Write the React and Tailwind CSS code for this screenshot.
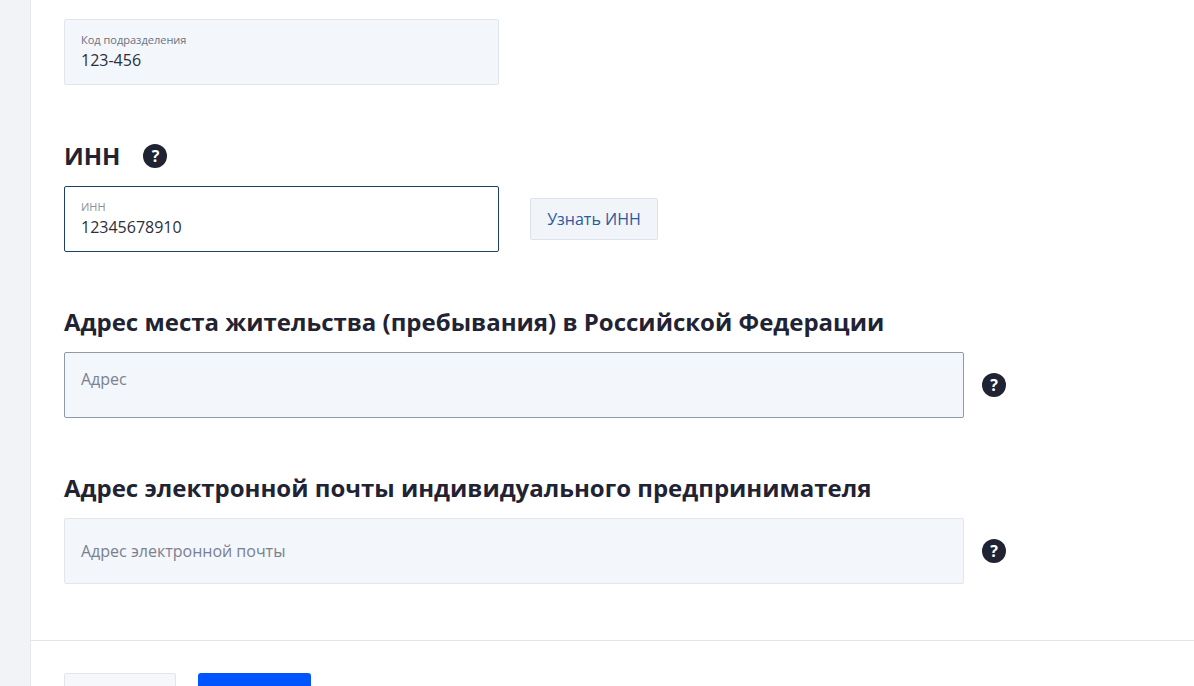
const Help = ({ c = "" }) => (
  <span className={"flex h-6 w-6 items-center justify-center rounded-full bg-[#1f2333] text-[16px] font-bold leading-none text-white " + c}>?</span>
);

export default function App() {
  return (
    <div className="flex h-[686px] w-[1194px] overflow-hidden bg-white text-[#1f2333]" style={{ fontFamily: '"Open Sans", sans-serif' }}>
      <div className="w-[31px] shrink-0 border-r border-[#e4e7ec] bg-[#f1f3f7]" />
      <div className="flex-1">
        <div className="pl-[33px] pt-[19px]">
          <div className="h-[66px] w-[435px] rounded-[2px] border border-[#e1e5ec] bg-[#f3f6fa] px-4 pt-[11px]">
            <div className="text-[11px] leading-[17px] text-[#6b7280]">Код подразделения</div>
            <div className="text-[16px] leading-[24px] text-[#2b2f3a]">123-456</div>
          </div>
          <div className="mt-[57px] flex h-[28px] items-center gap-[23px]">
            <h2 className="text-[24px] font-bold leading-none">ИНН</h2>
            <Help />
          </div>
          <div className="mt-[16px] flex items-start gap-[31px]">
            <div className="h-[66px] w-[435px] rounded-[2px] border border-[#1f3f6b] bg-white px-4 pt-[11px]">
              <div className="text-[11px] leading-[17px] text-[#8a8f99]">ИНН</div>
              <div className="text-[16px] leading-[24px] text-[#2b2f3a]">12345678910</div>
            </div>
            <button className="mt-[12px] h-[42px] w-[128px] rounded-[2px] border border-[#dde3ec] bg-[#f1f4f9] text-[16px] text-[#2a5aa0]">Узнать ИНН</button>
          </div>
          <h2 className="mt-[55px] text-[24px] font-bold leading-[30px]">Адрес места жительства (пребывания) в Российской Федерации</h2>
          <div className="mt-[15px] flex items-center gap-[16px]">
            <div className="h-[66px] w-[900px] rounded-[2px] border border-[#8f99a8] bg-[#f3f6fa] px-4 pt-[14px] text-[16px] text-[#7a8090]">Адрес</div>
            <Help c="ml-[2px]" />
          </div>
          <h2 className="mt-[55px] text-[24px] font-bold leading-[30px]">Адрес электронной почты индивидуального предпринимателя</h2>
          <div className="mt-[15px] flex items-center gap-[16px]">
            <div className="flex h-[66px] w-[900px] items-center rounded-[2px] border border-[#e1e5ec] bg-[#f3f6fa] px-4 text-[16px] text-[#7a8090]">Адрес электронной почты</div>
            <Help c="ml-[2px]" />
          </div>
        </div>
        <div className="mt-[56px] border-t border-[#e1e4ea] pl-[33px] pt-[32px]">
          <div className="flex gap-[22px]">
            <div className="h-[44px] w-[112px] rounded-[2px] border border-[#e1e5ec] bg-[#f5f7fa]" />
            <div className="h-[44px] w-[113px] rounded-[3px] bg-[#0055ff]" />
          </div>
        </div>
      </div>
    </div>
  );
}
